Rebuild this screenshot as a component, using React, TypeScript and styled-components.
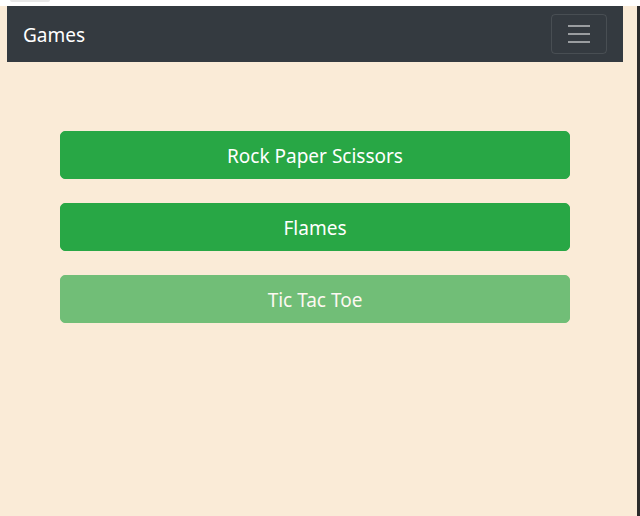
import * as React from "react";
import styled, { createGlobalStyle } from "styled-components";

const GlobalStyle = createGlobalStyle`
  html, body {
    margin: 0;
    padding: 0;
    background: #fff;
    font-family: "Noto Sans", "Open Sans", sans-serif;
  }
`;

const TopStrip = styled.div`
  height: 6px;
  background: #fff;
  display: flex;
`;

const Tab = styled.div`
  margin-left: 10px;
  width: 40px;
  height: 2px;
  background: #e8e8e8;
  border-radius: 0 0 3px 3px;
`;

const Frame = styled.div`
  height: 510px;
  background: #faebd7;
  border-right: 3px solid #2b2b2b;
  box-sizing: border-box;
  padding-left: 7px;
`;

const Page = styled.div`
  width: 616px;
`;

const Navbar = styled.nav`
  height: 56px;
  box-sizing: border-box;
  background: #343a40;
  padding: 8px 16px;
  display: flex;
  align-items: center;
  justify-content: space-between;
`;

const Brand = styled.a`
  color: #fff;
  font-size: 19px;
  line-height: 30px;
  padding-top: 2px;
  text-decoration: none;
`;

const Toggler = styled.button`
  width: 56px;
  height: 40px;
  box-sizing: border-box;
  background: transparent;
  border: 1px solid rgba(255, 255, 255, 0.1);
  border-radius: 4px;
  display: flex;
  align-items: center;
  justify-content: center;
  padding: 0;
`;

const Games = styled.div`
  padding: 69px 53px 0;
  display: flex;
  flex-direction: column;
  gap: 24px;
`;

const GameButton = styled.button<{ $disabled?: boolean }>`
  height: 48px;
  box-sizing: border-box;
  background: #28a745;
  border: 1px solid #28a745;
  border-radius: 5px;
  padding: 2px 16px 0;
  color: #fff;
  font-family: inherit;
  font-size: 19px;
  line-height: 30px;
  opacity: ${(p) => (p.$disabled ? 0.65 : 1)};
  cursor: ${(p) => (p.$disabled ? "default" : "pointer")};
`;

const games = [
  { name: "Rock Paper Scissors" },
  { name: "Flames" },
  { name: "Tic Tac Toe", disabled: true },
];

export default function App() {
  return (
    <>
      <GlobalStyle />
      <TopStrip>
        <Tab />
      </TopStrip>
      <Frame>
        <Page>
          <Navbar>
            <Brand href="#">Games</Brand>
            <Toggler aria-label="Toggle navigation">
              <svg width="30" height="30" viewBox="0 0 30 30">
                <path
                  d="M4 7h22M4 15h22M4 23h22"
                  stroke="rgba(255,255,255,0.5)"
                  strokeWidth="2"
                />
              </svg>
            </Toggler>
          </Navbar>
          <Games>
            {games.map((g) => (
              <GameButton key={g.name} $disabled={g.disabled}>
                {g.name}
              </GameButton>
            ))}
          </Games>
        </Page>
      </Frame>
    </>
  );
}
